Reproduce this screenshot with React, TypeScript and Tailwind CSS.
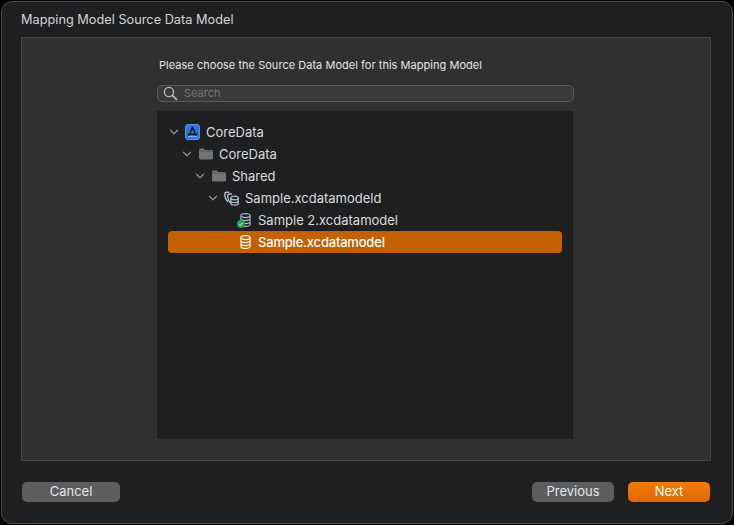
import React from 'react';

const font = { fontFamily: 'Inter, "Liberation Sans", sans-serif' };

const Chevron = () => (
  <svg width="10" height="10" viewBox="0 0 10 10" fill="none" className="shrink-0">
    <path d="M1.5 3.2L5 6.8l3.5-3.6" stroke="#8f9092" strokeWidth="1.3" strokeLinecap="round" strokeLinejoin="round" />
  </svg>
);

const ProjectIcon = () => (
  <svg width="15" height="16" viewBox="0 0 15 16" className="shrink-0">
    <rect x="0.5" y="0.5" width="14" height="15" rx="2.5" fill="#2f76d6" stroke="#4e97f0" />
    <path d="M7.5 3.2L4 11.5M7.5 3.2l3.5 8.3M3 10.2h9" stroke="#0f1a2c" strokeWidth="1.5" fill="none" strokeLinecap="round" />
    <path d="M2.8 12.6h9.4" stroke="#a9cdf8" strokeWidth="0.8" />
  </svg>
);

const FolderIcon = () => (
  <svg width="14" height="12" viewBox="0 0 14 12" className="shrink-0">
    <path d="M0 2a1.5 1.5 0 0 1 1.5-1.5h3.2L6 2h6.5A1.5 1.5 0 0 1 14 3.5V10a1.5 1.5 0 0 1-1.5 1.5h-11A1.5 1.5 0 0 1 0 10z" fill="#737476" />
    <path d="M0 3h14" stroke="#4c4d4f" strokeWidth="0.7" />
  </svg>
);

const BundleIcon = () => (
  <svg width="15" height="15" viewBox="0 0 15 15" fill="none" className="shrink-0" stroke="#a9c0d0" strokeWidth="1.4">
    <path d="M5.2 1.2H3C1.6 1.2.8 2 .8 3.2c0 2.8 1.2 5.8 3.2 7.3" />
    <path d="M8 3H5.8C4.5 3 3.8 3.8 3.8 5c0 2.7 1.2 5.6 3 7" />
    <ellipse cx="10.6" cy="7" rx="3.7" ry="1.9" fill="#1e1f21" strokeWidth="1.2" />
    <path d="M6.9 7v5.2c0 1 1.7 1.9 3.7 1.9s3.7-.9 3.7-1.9V7M6.9 9.8c0 1 1.7 1.9 3.7 1.9s3.7-.9 3.7-1.9" strokeWidth="1.2" />
  </svg>
);

const ModelIcon = ({ color, check }: { color: string; check?: boolean }) => (
  <span className="relative ml-[1px] flex shrink-0">
    <svg width="11" height="14" viewBox="0 0 11 14" fill="none" stroke={color} strokeWidth="1.1">
      <ellipse cx="5.5" cy="2.6" rx="4.6" ry="2" />
      <path d="M.9 2.6v8.8c0 1.1 2 2 4.6 2s4.6-.9 4.6-2V2.6M.9 5.6c0 1.1 2 2 4.6 2s4.6-.9 4.6-2M.9 8.6c0 1.1 2 2 4.6 2s4.6-.9 4.6-2" />
    </svg>
    {check && (
      <svg width="8" height="8" viewBox="0 0 8 8" className="absolute -left-[3px] bottom-[-1px]">
        <circle cx="4" cy="4" r="4" fill="#23a455" />
        <path d="M2.2 4.1l1.3 1.3 2.4-2.6" stroke="#fff" strokeWidth="1" fill="none" />
      </svg>
    )}
  </span>
);

type Row = { name: string; level: number; icon: React.ReactNode; open: boolean; selected?: boolean };

const rows: Row[] = [
  { name: 'CoreData', level: 0, icon: <ProjectIcon />, open: true },
  { name: 'CoreData', level: 1, icon: <FolderIcon />, open: true },
  { name: 'Shared', level: 2, icon: <FolderIcon />, open: true },
  { name: 'Sample.xcdatamodeld', level: 3, icon: <BundleIcon />, open: true },
  { name: 'Sample 2.xcdatamodel', level: 4, icon: <ModelIcon color="#a9c0d0" check />, open: false },
  { name: 'Sample.xcdatamodel', level: 4, icon: <ModelIcon color="#ffffff" />, open: false, selected: true },
];

const levelPadding = ['pl-0', 'pl-[13px]', 'pl-[26px]', 'pl-[39px]', 'pl-[52px]'];

const TreeRow = ({ row }: { row: Row }) => (
  <div className={`flex h-[22px] items-center rounded-[4px] pl-[1px] ${row.selected ? 'bg-[#c46000] font-medium tracking-[-0.2px] text-white' : 'text-[#dcdcdd]'}`}>
    <div className={`flex items-center ${levelPadding[row.level]}`}>
      <span className="flex w-[10px] justify-center">{row.open && <Chevron />}</span>
      <span className="flex w-[27px] items-center justify-center px-[3px]">{row.icon}</span>
      <span className="text-[13px] leading-none">{row.name}</span>
    </div>
  </div>
);

const Button = ({ label, className }: { label: string; className: string }) => (
  <button className={`flex h-[20px] items-center justify-center rounded-[5px] pb-[1px] text-[13px] leading-none ${className}`}>{label}</button>
);

export default function App() {
  return (
    <div className="h-[525px] w-[734px] overflow-hidden bg-black p-[1px]" style={font}>
      <div className="flex h-[523px] w-[732px] flex-col rounded-[11px] border border-[#4d4e50] bg-[#1e1f21] pr-[21px] pl-[19px]">
        <div className="flex h-[35px] shrink-0 items-center pt-[1px] text-[12.75px] text-[#d4d4d5]">Mapping Model Source Data Model</div>
        <div className="flex h-[424px] shrink-0 flex-col border border-[#454545] bg-[#303030] pl-[135px]">
          <div className="w-[417px]">
            <p className="mt-[19px] ml-[2px] h-[16px] text-[11px] leading-[16px] tracking-[0.03px] text-[#e4e4e4]">Please choose the Source Data Model for this Mapping Model</p>
            <div className="mt-[12px] flex h-[17px] items-center gap-[6px] rounded-[5px] border border-[#5a5a5a] bg-[#3a3a3a] pl-[5px]">
              <svg width="15" height="15" viewBox="0 0 15 15" fill="none" stroke="#b8b8b8" strokeWidth="1.4" className="shrink-0">
                <circle cx="6" cy="6" r="4.6" />
                <path d="M9.6 9.6l4 4" strokeLinecap="round" strokeWidth="1.8" />
              </svg>
              <span className="text-[11px] leading-none text-[#737373]">Search</span>
            </div>
            <div className="mt-[9px] h-[328px] w-[416px] bg-[#1e1f21] px-[11px] pt-[10px]">
              {rows.map((row) => (
                <TreeRow key={row.name + row.level} row={row} />
              ))}
            </div>
          </div>
        </div>
        <div className="flex flex-1 items-start justify-between pt-[21px] pr-[1px] pl-[1px]">
          <Button label="Cancel" className="w-[98px] bg-[#5c5d5f] text-[#e6e6e6]" />
          <div className="flex gap-[14px]">
            <Button label="Previous" className="w-[82px] bg-[#5c5d5f] text-[#e6e6e6]" />
            <Button label="Next" className="w-[82px] bg-gradient-to-b from-[#f47a05] to-[#dd6800] text-white" />
          </div>
        </div>
      </div>
    </div>
  );
}
